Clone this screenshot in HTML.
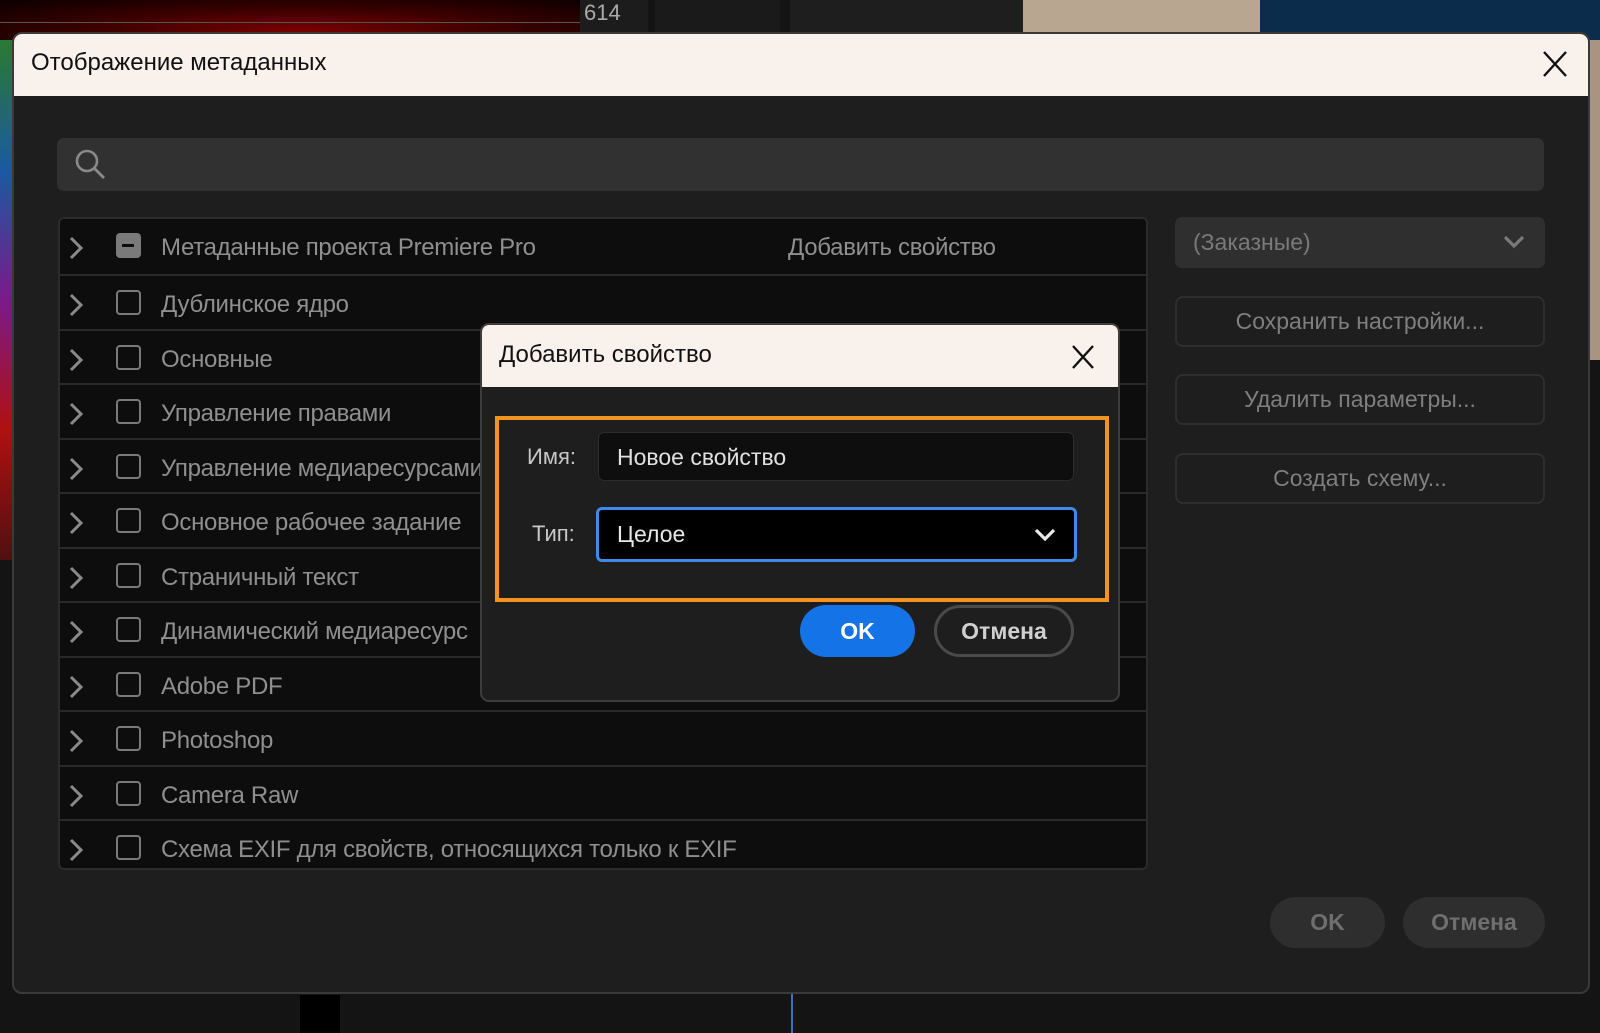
<!DOCTYPE html>
<html><head><meta charset="utf-8"><style>
*{box-sizing:border-box;margin:0;padding:0}
body{width:1600px;height:1033px;overflow:hidden;background:#141414;font-family:"Liberation Sans",sans-serif;position:relative}
.a{position:absolute}
.row{position:absolute;left:0;width:1088px;height:54.5px;border-bottom:2px solid #2a2a2a}
.row .chev{position:absolute;left:8px;top:16px}
.row .cb{position:absolute;left:56px;top:14px;width:25px;height:25px;border:2.5px solid #7a7a7a;border-radius:4px}
.row .t{position:absolute;left:101px;top:15px;font-size:24px;color:#8f8f8f;letter-spacing:-0.3px;white-space:nowrap}
.btn{position:absolute;left:1175px;width:370px;height:51px;border:2px solid #2e2e2e;border-radius:8px;color:#7f7f7f;font-size:23px;text-align:center;line-height:46px;letter-spacing:0}
</style></head><body>
<div class="a" style="left:0;top:0;width:590px;height:60px;background:radial-gradient(ellipse at 300px 30px,#7a0000 0,#3a0000 50%,#0a0000 100%)"></div>
<div class="a" style="left:0;top:22px;width:580px;height:1px;background:#555"></div>
<div class="a" style="left:580px;top:0;width:68px;height:60px;background:#1c1c1c;color:#aaa;font-size:22px;padding:0 0 0 4px">614</div>
<div class="a" style="left:655px;top:0;width:125px;height:60px;background:#1a1a1a"></div>
<div class="a" style="left:790px;top:0;width:233px;height:60px;background:#1e1e1e"></div>
<div class="a" style="left:1023px;top:0;width:260px;height:60px;background:#b8a690"></div>
<div class="a" style="left:1260px;top:0;width:340px;height:60px;background:#0c2c4c"></div>
<div class="a" style="left:0;top:40px;width:14px;height:520px;background:linear-gradient(180deg,#2a7a30,#1a5aa0,#7a1a8a,#b01010,#501010)"></div>
<div class="a" style="left:1588px;top:40px;width:12px;height:320px;background:#a89480"></div>
<div class="a" style="left:300px;top:995px;width:40px;height:38px;background:#000"></div>
<div class="a" style="left:791px;top:993px;width:2px;height:40px;background:#3a70c0"></div>

<div class="a" style="left:12px;top:32px;width:1578px;height:962px;background:#1e1e1e;border:2px solid #3a3a3a;border-radius:10px;overflow:hidden">
  <div class="a" style="left:0;top:0;width:100%;height:62px;background:#f8f1ec"></div>
  <div class="a" style="left:17px;top:15px;font-size:24px;color:#111">Отображение метаданных</div>
  <svg class="a" style="left:1528px;top:16px" width="26" height="28" viewBox="0 0 26 28"><path d="M2 2L24 26M24 2L2 26" stroke="#111" stroke-width="2.4"/></svg>
  <div class="a" style="left:43px;top:104px;width:1487px;height:53px;background:#313131;border-radius:7px"></div>
  <svg class="a" style="left:60px;top:114px" width="34" height="34" viewBox="0 0 34 34"><circle cx="13" cy="13" r="10" stroke="#8a8a8a" stroke-width="2.6" fill="none"/><path d="M20 20L30 30" stroke="#8a8a8a" stroke-width="2.8"/></svg>
  <div class="a" style="left:44px;top:183px;width:1090px;height:653px;background:#0d0d0d;border:2px solid #2c2c2c;border-radius:6px;overflow:hidden">
    <div class="row" style="top:0;height:57px"><svg class="chev" width="16" height="26"><path d="M3 3L13 13L3 23" stroke="#8a8a8a" stroke-width="3" fill="none"/></svg><div class="cb" style="background:#7a7a7a"><div style="position:absolute;left:4px;top:9px;width:12px;height:3px;background:#0d0d0d"></div></div><div class="t">Метаданные проекта Premiere Pro</div><div class="t" style="left:728px">Добавить свойство</div></div>
    <div class="row" style="top:57px"><svg class="chev" width="16" height="26"><path d="M3 3L13 13L3 23" stroke="#8a8a8a" stroke-width="3" fill="none"/></svg><div class="cb"></div><div class="t">Дублинское ядро</div></div>
    <div class="row" style="top:111.5px"><svg class="chev" width="16" height="26"><path d="M3 3L13 13L3 23" stroke="#8a8a8a" stroke-width="3" fill="none"/></svg><div class="cb"></div><div class="t">Основные</div></div>
    <div class="row" style="top:166px"><svg class="chev" width="16" height="26"><path d="M3 3L13 13L3 23" stroke="#8a8a8a" stroke-width="3" fill="none"/></svg><div class="cb"></div><div class="t">Управление правами</div></div>
    <div class="row" style="top:220.5px"><svg class="chev" width="16" height="26"><path d="M3 3L13 13L3 23" stroke="#8a8a8a" stroke-width="3" fill="none"/></svg><div class="cb"></div><div class="t">Управление медиаресурсами</div></div>
    <div class="row" style="top:275px"><svg class="chev" width="16" height="26"><path d="M3 3L13 13L3 23" stroke="#8a8a8a" stroke-width="3" fill="none"/></svg><div class="cb"></div><div class="t">Основное рабочее задание</div></div>
    <div class="row" style="top:329.5px"><svg class="chev" width="16" height="26"><path d="M3 3L13 13L3 23" stroke="#8a8a8a" stroke-width="3" fill="none"/></svg><div class="cb"></div><div class="t">Страничный текст</div></div>
    <div class="row" style="top:384px"><svg class="chev" width="16" height="26"><path d="M3 3L13 13L3 23" stroke="#8a8a8a" stroke-width="3" fill="none"/></svg><div class="cb"></div><div class="t">Динамический медиаресурс</div></div>
    <div class="row" style="top:438.5px"><svg class="chev" width="16" height="26"><path d="M3 3L13 13L3 23" stroke="#8a8a8a" stroke-width="3" fill="none"/></svg><div class="cb"></div><div class="t">Adobe PDF</div></div>
    <div class="row" style="top:493px"><svg class="chev" width="16" height="26"><path d="M3 3L13 13L3 23" stroke="#8a8a8a" stroke-width="3" fill="none"/></svg><div class="cb"></div><div class="t">Photoshop</div></div>
    <div class="row" style="top:547.5px"><svg class="chev" width="16" height="26"><path d="M3 3L13 13L3 23" stroke="#8a8a8a" stroke-width="3" fill="none"/></svg><div class="cb"></div><div class="t">Camera Raw</div></div>
    <div class="row" style="top:602px;border:none"><svg class="chev" width="16" height="26"><path d="M3 3L13 13L3 23" stroke="#8a8a8a" stroke-width="3" fill="none"/></svg><div class="cb"></div><div class="t">Схема EXIF для свойств, относящихся только к EXIF</div></div>
  </div>
</div>
<div class="a" style="left:1175px;top:217px;width:370px;height:51px;background:#2f2f2f;border-radius:7px"></div>
<div class="a" style="left:1193px;top:229px;font-size:23px;color:#7a7a7a">(Заказные)</div>
<svg class="a" style="left:1502px;top:233px" width="24" height="18"><path d="M3 4L12 13L21 4" stroke="#7a7a7a" stroke-width="3.2" fill="none"/></svg>
<div class="btn" style="top:296px">Сохранить настройки...</div>
<div class="btn" style="top:374px">Удалить параметры...</div>
<div class="btn" style="top:453px">Создать схему...</div>
<div class="a" style="left:1270px;top:897px;width:115px;height:51px;border-radius:26px;background:#2e2e2e;color:#6f6f6f;font-size:23px;font-weight:bold;text-align:center;line-height:51px">OK</div>
<div class="a" style="left:1403px;top:897px;width:142px;height:51px;border-radius:26px;background:#2e2e2e;color:#6f6f6f;font-size:23px;font-weight:bold;text-align:center;line-height:51px">Отмена</div>

<div class="a" style="left:480px;top:323px;width:640px;height:379px;background:#1e1e1e;border:2px solid #3c3c3c;border-radius:9px;overflow:hidden">
  <div class="a" style="left:0;top:0;width:100%;height:62px;background:#f8f1ec"></div>
  <div class="a" style="left:17px;top:16px;font-size:24px;color:#111">Добавить свойство</div>
  <svg class="a" style="left:589px;top:19px" width="24" height="26"><path d="M2 2L22 24M22 2L2 24" stroke="#111" stroke-width="2.4"/></svg>
</div>
<div class="a" style="left:495px;top:416px;width:614px;height:186px;border:4px solid #f29423"></div>
<div class="a" style="left:527px;top:444px;font-size:22px;color:#c8c8c8">Имя:</div>
<div class="a" style="left:598px;top:432px;width:476px;height:49px;background:#0e0e0e;border:1.5px solid #2c2c2c;border-radius:6px"></div>
<div class="a" style="left:617px;top:444px;font-size:23px;color:#e0e0e0">Новое свойство</div>
<div class="a" style="left:532px;top:521px;font-size:22px;color:#c8c8c8">Тип:</div>
<div class="a" style="left:596px;top:507px;width:481px;height:55px;background:#000;border:3px solid #3f8ae8;border-radius:6px"></div>
<div class="a" style="left:617px;top:521px;font-size:23px;color:#e8e8e8">Целое</div>
<svg class="a" style="left:1033px;top:526px" width="24" height="18"><path d="M3 4L12 13L21 4" stroke="#e8e8e8" stroke-width="3.2" fill="none"/></svg>
<div class="a" style="left:800px;top:605px;width:115px;height:52px;border-radius:26px;background:#1473e6;color:#fff;font-size:23px;font-weight:bold;text-align:center;line-height:52px">OK</div>
<div class="a" style="left:934px;top:605px;width:140px;height:52px;border-radius:26px;border:3px solid #4a4a4a;color:#d0d0d0;font-size:23px;font-weight:bold;text-align:center;line-height:46px">Отмена</div>
</body></html>
